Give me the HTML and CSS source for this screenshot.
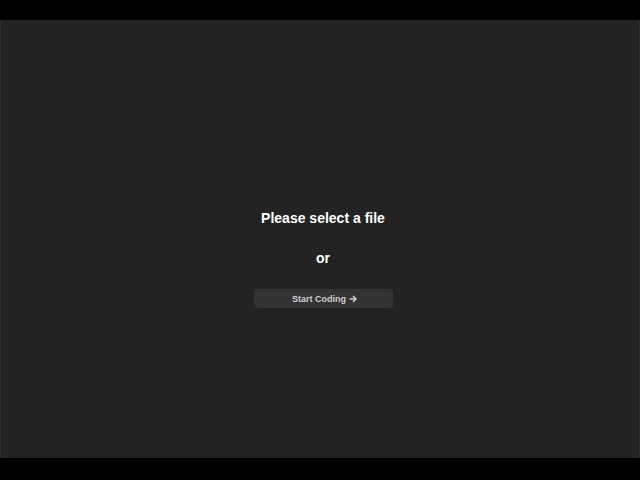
FILE: index.html
```html
<!DOCTYPE html>
<html lang="en">
<head>
    <meta charset="UTF-8">
    <meta name="viewport" content="width=device-width, initial-scale=1.0">
    <title>Editor</title>
    <link rel="stylesheet" href="styles.css">
</head>
<body>
    <div class="editor">
        <div class="empty-state">
            <h2 class="empty-title">Please select a file</h2>
            <p class="empty-or">or</p>
            <button class="start-btn">Start Coding
                <svg class="arrow" width="8" height="8" viewBox="0 0 8 8">
                    <path d="M0.5 4H7M4 1L7 4L4 7" fill="none" stroke="#cfcfcf" stroke-width="1.5"/>
                </svg>
            </button>
        </div>
    </div>
</body>
</html>
```

FILE: styles.css
```css
body {
    margin: 0;
    background-color: #000;
    font-family: "Liberation Sans", Arial, sans-serif;
}

/* Editor panel */
.editor {
    margin-top: 20px;
    height: 438px;
    background-color: #232323;
    border-left: 1px solid #2e2e2e;
    border-right: 1px solid #2e2e2e;
    box-sizing: border-box;
}

.empty-state {
    display: flex;
    flex-direction: column;
    align-items: center;
    padding-top: 190px;
    padding-left: 6px;
}

.empty-title {
    margin: 0;
    font-size: 14px;
    font-weight: bold;
    color: #fff;
    line-height: 16px;
}

.empty-or {
    margin: 24px 0 0;
    font-size: 14px;
    font-weight: bold;
    color: #fff;
    line-height: 16px;
}

/* Button */
.start-btn {
    margin-top: 23px;
    width: 139px;
    height: 19px;
    background-color: #333;
    color: #cfcfcf;
    border: none;
    border-radius: 3px;
    font-family: inherit;
    font-size: 9px;
    font-weight: bold;
    padding: 0 0 0 3px;
    cursor: pointer;
    display: flex;
    align-items: center;
    justify-content: center;
    gap: 3px;
}

.arrow {
    display: block;
}
```
